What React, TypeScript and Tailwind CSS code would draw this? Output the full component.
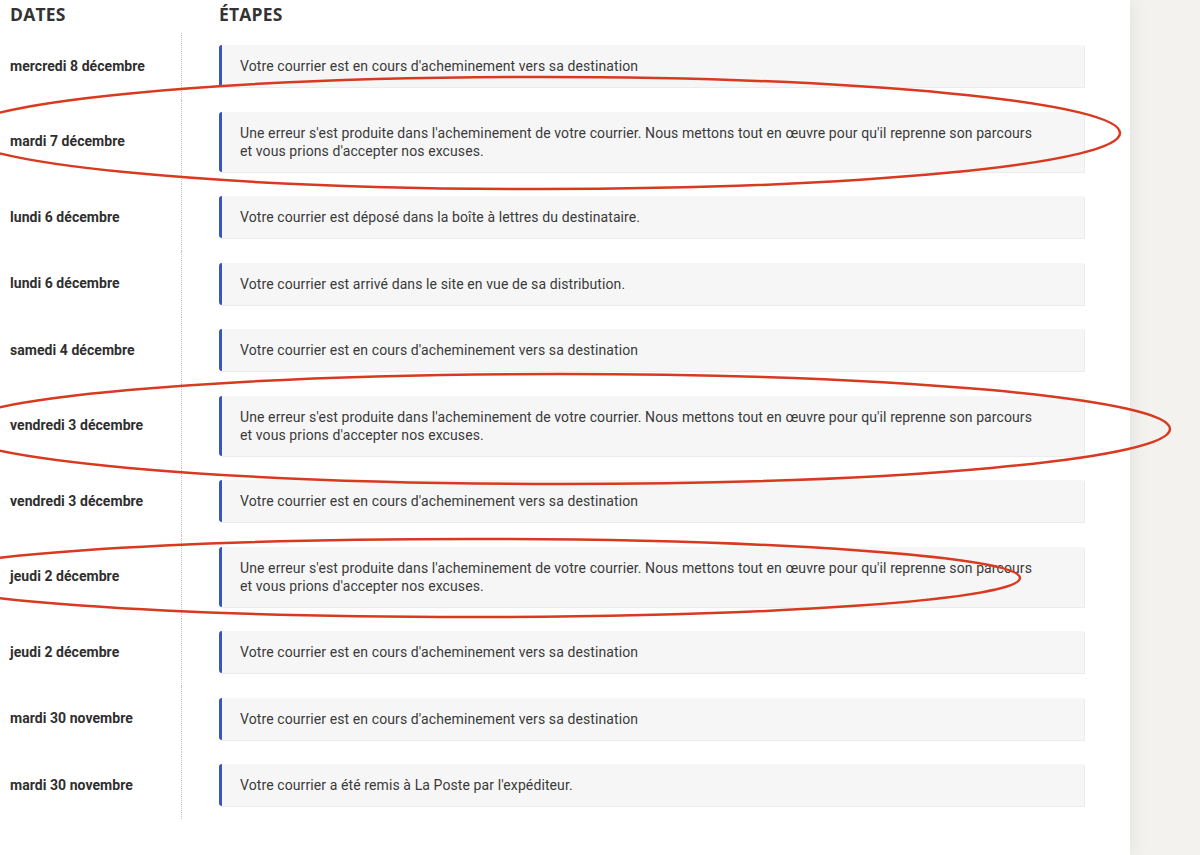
import React from 'react';

interface Step {
  date: string;
  text: React.ReactNode;
}

const ERROR_TEXT = (
  <>
    Une erreur s'est produite dans l'acheminement de votre courrier. Nous mettons tout en œuvre pour qu'il reprenne son parcours
    <br />
    et vous prions d'accepter nos excuses.
  </>
);

const TRANSIT = "Votre courrier est en cours d'acheminement vers sa destination";

const steps: Step[] = [
  { date: 'mercredi 8 décembre', text: TRANSIT },
  { date: 'mardi 7 décembre', text: ERROR_TEXT },
  { date: 'lundi 6 décembre', text: 'Votre courrier est déposé dans la boîte à lettres du destinataire.' },
  { date: 'lundi 6 décembre', text: 'Votre courrier est arrivé dans le site en vue de sa distribution.' },
  { date: 'samedi 4 décembre', text: TRANSIT },
  { date: 'vendredi 3 décembre', text: ERROR_TEXT },
  { date: 'vendredi 3 décembre', text: TRANSIT },
  { date: 'jeudi 2 décembre', text: ERROR_TEXT },
  { date: 'jeudi 2 décembre', text: TRANSIT },
  { date: 'mardi 30 novembre', text: TRANSIT },
  { date: 'mardi 30 novembre', text: "Votre courrier a été remis à La Poste par l'expéditeur." },
];

function App() {
  return (
    <div className="relative min-h-screen w-[1200px] h-[855px] overflow-hidden bg-[#f3f2ef] flex font-['Roboto',sans-serif]">
      <div className="w-[1130px] h-full bg-white shadow-[2px_0_18px_rgba(0,0,0,0.07)]">
        {/* column headers */}
        <div className="flex h-[33px] pt-[3px] text-[17.5px] leading-[23px] font-bold text-[#333] font-['Open_Sans',sans-serif] tracking-[0.2px]">
          <div className="w-[219px] pl-[10px]">DATES</div>
          <div>ÉTAPES</div>
        </div>

        {/* timeline */}
        <div className="flex flex-col">
          {steps.map((step, i) => (
            <div key={i} className="grid grid-cols-[182px_1fr]">
              <div className="flex items-center pl-[10px] border-r border-dotted border-[#c4c4c4] text-[14px] font-bold text-[#2f2f2f] tracking-[0.05px]">
                {step.date}
              </div>
              <div className="py-[12.25px] pl-[37px] pr-[46px]">
                <div className="bg-[#f6f6f6] border-l-[3px] border-[#3a56b9] rounded-l-[3px] shadow-[1px_1px_0_#ececec] pl-[18px] pr-4 py-3 text-[14px] leading-[18px] tracking-[0.1px] text-[#3a3a3a]">
                  {step.text}
                </div>
              </div>
            </div>
          ))}
        </div>
      </div>

      {/* hand-drawn highlight marks */}
      <svg
        className="absolute left-0 top-0 pointer-events-none"
        width="1200"
        height="855"
        viewBox="0 0 1200 855"
        fill="none"
      >
        <ellipse cx="540" cy="133" rx="580" ry="56" stroke="#d8391f" strokeWidth="2.5" />
        <ellipse cx="560" cy="429" rx="610" ry="55" stroke="#d8391f" strokeWidth="2.5" />
        <ellipse cx="470" cy="578" rx="550" ry="39" stroke="#d8391f" strokeWidth="2.5" />
      </svg>
    </div>
  );
}

export default App;
